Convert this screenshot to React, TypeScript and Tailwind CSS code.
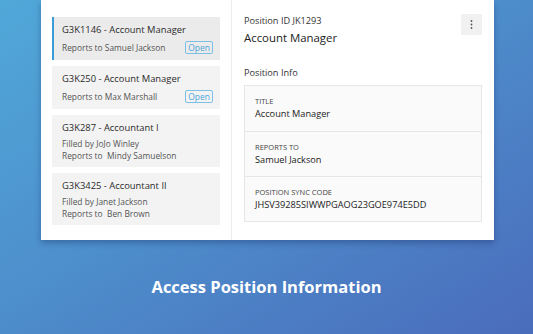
import React from 'react';

const positions = [
  { code: "G3K1146", title: "Account Manager", lines: ["Reports to Samuel Jackson"], open: true, active: true },
  { code: "G3K250", title: "Account Manager", lines: ["Reports to Max Marshall"], open: true },
  { code: "G3K287", title: "Accountant I", lines: ["Filled by JoJo Winley", "Reports to  Mindy Samuelson"] },
  { code: "G3K3425", title: "Accountant II", lines: ["Filled by Janet Jackson", "Reports to  Ben Brown"] },
];

const info = [
  { label: "Title", value: "Account Manager" },
  { label: "Reports to", value: "Samuel Jackson" },
  { label: "Position Sync Code", value: "JHSV39285SIWWPGAOG23GOE974E5DD" },
];

const App = () => {
  return (
    <div
      className="w-[533px] h-[334px] overflow-hidden bg-gradient-to-br from-[#50a8d9] via-[#4d8ccb] to-[#4a6cbb] flex flex-col"
      style={{ fontFamily: '"Open Sans", sans-serif' }}
    >
      <div className="ml-[41px] w-[453px] h-[240px] bg-white flex shadow-[0_3px_6px_rgba(20,40,90,0.35)]">
        {/* left list */}
        <div className="w-[191px] border-r border-[#ececec] pl-[11px] pr-[11px] pt-[17px] flex flex-col gap-[6px]">
          {positions.map((p) => (
            <div
              key={p.code}
              className={
                p.active
                  ? "relative bg-[#ebebeb] border-l-2 border-[#3b9bd8] pl-[8px] pr-[7px] h-[43px] pt-[6px]"
                  : p.open
                  ? "relative bg-[#f3f3f3] pl-[10px] pr-[7px] h-[43px] pt-[6px]"
                  : "bg-[#f3f3f3] pl-[10px] pr-[7px] h-[52px] pt-[6px]"
              }
            >
              <div className="text-[9.4px] leading-[14px] text-[#2b2b2b]">
                {p.code} - {p.title}
              </div>
              <div className={p.open ? "mt-[5px]" : "mt-[3px]"}>
                {p.lines.map((l) => (
                  <div key={l} className="text-[8.4px] leading-[12px] text-[#555] whitespace-pre">
                    {l}
                  </div>
                ))}
              </div>
              {p.open && (
                <span className="absolute right-[7px] bottom-[6px] border border-[#7cc0e6] rounded-[2px] px-[2px] text-[8.5px] leading-[11px] text-[#4ea7dc]">
                  Open
                </span>
              )}
            </div>
          ))}
        </div>

        {/* right details */}
        <div className="flex-1 pl-[12px] pr-[12px] pt-[14px]">
          <div className="flex justify-between items-start">
            <div>
              <div className="text-[9.2px] leading-[13px] text-[#333]">Position ID JK1293</div>
              <div className="text-[11.4px] leading-[18px] text-[#222] mt-[2px]">Account Manager</div>
            </div>
            <button className="w-[21px] h-[21px] bg-[#f1f1f1] flex items-center justify-center">
              <svg width="3" height="9" viewBox="0 0 3 9">
                <circle cx="1.5" cy="1" r="0.9" fill="#555" />
                <circle cx="1.5" cy="4.5" r="0.9" fill="#555" />
                <circle cx="1.5" cy="8" r="0.9" fill="#555" />
              </svg>
            </button>
          </div>
          <div className="text-[9.2px] leading-[14px] text-[#333] mt-[19px]">Position Info</div>
          <div className="mt-[5px] border border-[#e6e6e6] bg-[#fafafa]">
            {info.map((r, i) => (
              <div
                key={r.label}
                className={
                  i === 0
                    ? "h-[45px] pl-[10px] pt-[10px]"
                    : "h-[45px] pl-[10px] pt-[10px] border-t border-[#e6e6e6]"
                }
              >
                <div className="text-[7.5px] leading-[10px] uppercase text-[#444]">{r.label}</div>
                <div className="text-[9.2px] leading-[15px] text-[#222]">{r.value}</div>
              </div>
            ))}
          </div>
        </div>
      </div>

      <div className="flex-1 flex items-center justify-center">
        <h1 className="text-[16.5px] font-bold text-white">Access Position Information</h1>
      </div>
    </div>
  );
};

export default App;
